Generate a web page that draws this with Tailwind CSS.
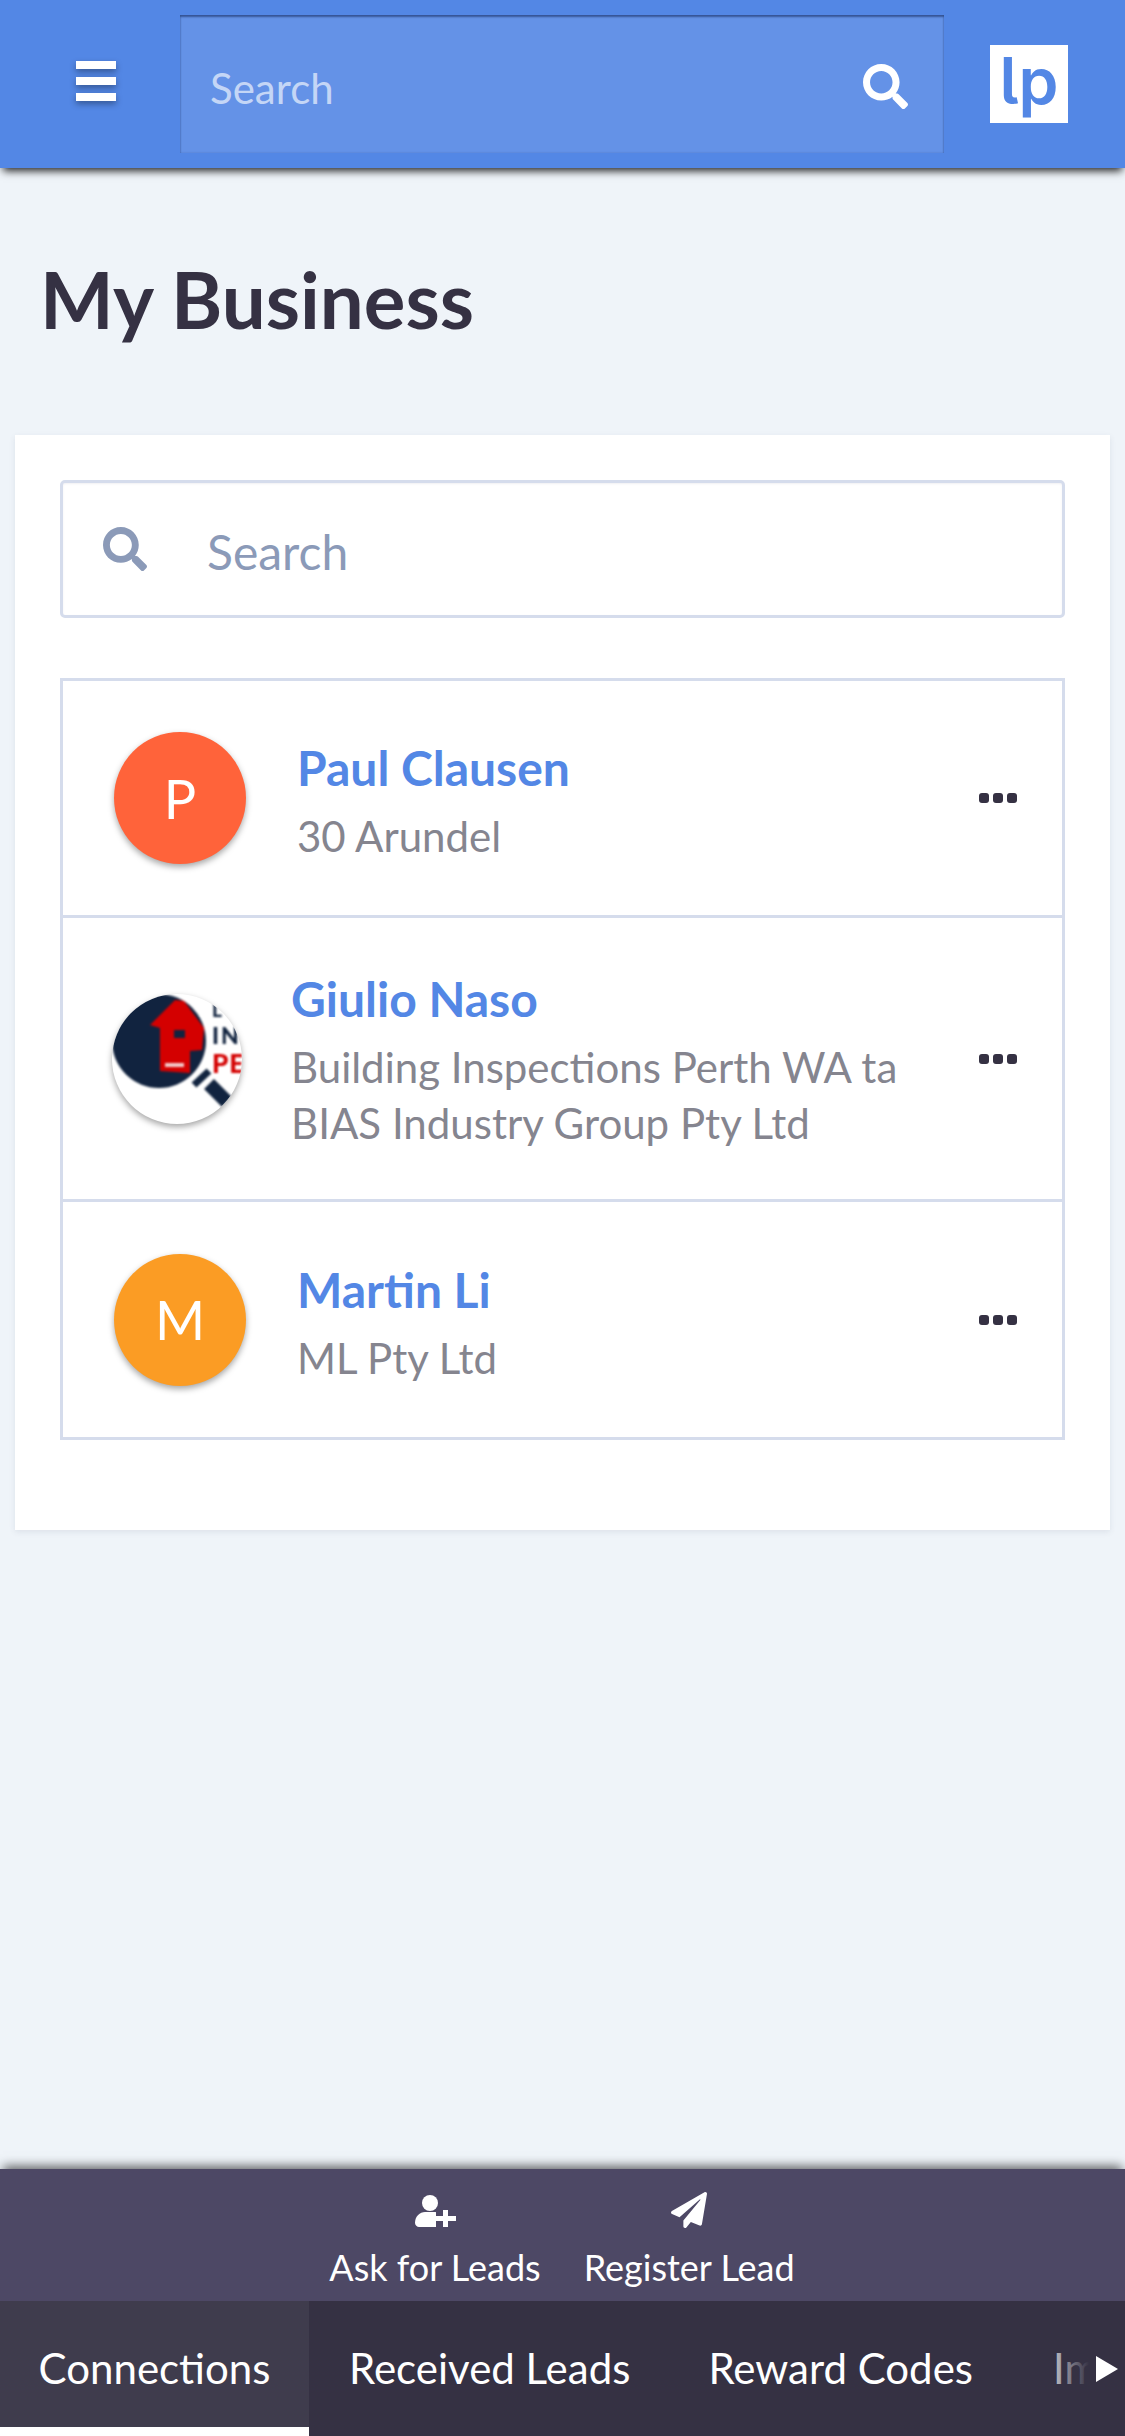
<!DOCTYPE html>
<html lang="en">
<head>
  <meta charset="UTF-8" />
  <meta name="viewport" content="width=device-width, initial-scale=1.0" />
  <title>My Business</title>
  <script src="https://cdn.jsdelivr.net/npm/@tailwindcss/browser@4"></script>
</head>
<body class="bg-[#eff4f9] font-['Lato',sans-serif] text-[#353143]">
  <div class="flex flex-col h-[2436px] overflow-hidden">

    <!-- Top bar -->
    <header class="relative z-10 flex items-center h-[168px] shrink-0 bg-[#5387e5] shadow-[0_6px_8px_-3px_rgba(0,0,0,0.85)]">
      <div class="flex flex-col gap-2 w-10 ml-[76px] -mt-[6px] drop-shadow-[0_3px_3px_rgba(0,0,0,0.35)]">
        <span class="h-2 bg-white"></span>
        <span class="h-2 bg-white"></span>
        <span class="h-2 bg-white"></span>
      </div>
      <div class="flex items-center justify-between w-[764px] h-[138px] ml-16 pl-[30px] pr-9 bg-[#6492e7] shadow-[inset_0_2px_2px_rgba(20,40,90,0.55),inset_0_0_2px_rgba(20,40,90,0.25)]">
        <span class="mt-[9px] text-[42px] text-[#c4d6f6]">Search</span>
        <svg class="mt-[4px] w-[45px] h-[45px] fill-white" viewBox="0 0 512 512"><path d="M505 442.7L405.3 343c-4.5-4.5-10.6-7-17-7H372c27.6-35.3 44-79.7 44-128C416 93.1 322.9 0 208 0S0 93.1 0 208s93.1 208 208 208c48.3 0 92.7-16.4 128-44v16.3c0 6.4 2.5 12.5 7 17l99.7 99.7c9.4 9.4 24.6 9.4 33.9 0l28.3-28.3c9.4-9.4 9.4-24.6.1-34zM208 336c-70.7 0-128-57.2-128-128 0-70.7 57.2-128 128-128 70.7 0 128 57.2 128 128 0 70.7-57.2 128-128 128z"/></svg>
      </div>
      <div class="flex items-center justify-center w-[78px] h-[78px] ml-[46px] bg-white text-[#5387e5] font-['Inter',sans-serif] text-[64px] font-semibold leading-none [font-feature-settings:'cv05']">
        <span class="-mt-[6px]">lp</span>
      </div>
    </header>

    <!-- Page content -->
    <main class="flex-1 min-h-0">
      <h1 class="h-[267px] pt-[93px] pl-[40px] text-[78px] leading-[76px] font-bold">My Business</h1>

      <section class="mx-[15px] h-[1095px] pt-[45px] px-[45px] bg-white shadow-[0_2px_6px_rgba(60,70,100,0.1)]">
        <div class="flex items-center h-[138px] pl-[40px] border-[3px] border-[#d5dcec] rounded-[5px] shadow-[inset_0_1px_2px_rgba(60,70,100,0.08)]">
          <svg class="w-[44px] h-[44px] fill-[#8b9ab8]" viewBox="0 0 512 512"><path d="M505 442.7L405.3 343c-4.5-4.5-10.6-7-17-7H372c27.6-35.3 44-79.7 44-128C416 93.1 322.9 0 208 0S0 93.1 0 208s93.1 208 208 208c48.3 0 92.7-16.4 128-44v16.3c0 6.4 2.5 12.5 7 17l99.7 99.7c9.4 9.4 24.6 9.4 33.9 0l28.3-28.3c9.4-9.4 9.4-24.6.1-34zM208 336c-70.7 0-128-57.2-128-128 0-70.7 57.2-128 128-128 70.7 0 128 57.2 128 128 0 70.7-57.2 128-128 128z"/></svg>
          <span class="ml-[60px] mt-[6px] text-[48px] text-[#8b9ab8]">Search</span>
        </div>

        <ul class="mt-[60px] border-[3px] border-[#d5dcec]">
          <li class="flex items-center h-[237px] pl-[51px] pr-[45px] border-b-[3px] border-[#d5dcec]">
            <div class="flex items-center justify-center w-[132px] h-[132px] shrink-0 rounded-full bg-[#ff633a] text-white text-[54px] shadow-[0_3px_6px_rgba(0,0,0,0.35)]">P</div>
            <div class="flex-1 ml-[51px] pt-[8px]">
              <p class="text-[48px] leading-[56px] font-bold text-[#5387e5]">Paul Clausen</p>
              <p class="mt-3 text-[42px] leading-[56px] text-[#85858f]">30 Arundel</p>
            </div>
            <div class="flex gap-1 shrink-0">
              <span class="w-[10px] h-[10px] rounded-[3px] bg-[#353143]"></span>
              <span class="w-[10px] h-[10px] rounded-[3px] bg-[#353143]"></span>
              <span class="w-[10px] h-[10px] rounded-[3px] bg-[#353143]"></span>
            </div>
          </li>
          <li class="flex items-center h-[284px] pl-[49px] pr-[45px] border-b-[3px] border-[#d5dcec]">
            <div class="w-[130px] h-[130px] shrink-0 rounded-full overflow-hidden bg-white shadow-[0_3px_6px_rgba(0,0,0,0.35)]">
              <svg class="w-full h-full blur-[0.8px]" viewBox="0 0 130 130">
                <circle cx="47" cy="47" r="47" fill="#11233f"/>
                <path d="M63 6L38 31L48 34V77L78 79V57L90 56L92 34L72 7Z" fill="#d40000"/>
                <rect x="62" y="36" width="11" height="8" fill="#11233f"/>
                <rect x="53" y="69" width="19" height="4" fill="#f3c9c9"/>
                <path d="M82 91L97 77" stroke="#11233f" stroke-width="7"/>
                <path d="M97 90L115 108" stroke="#11233f" stroke-width="14"/>
                <text x="100" y="23" font-family="Lato, sans-serif" font-size="19" font-weight="900" fill="#11233f">L</text>
                <text x="100" y="50" font-family="Lato, sans-serif" font-size="23" font-weight="900" letter-spacing="2" fill="#11233f">IN</text>
                <text x="100" y="79" font-family="Lato, sans-serif" font-size="26" font-weight="900" letter-spacing="1" fill="#d40000">PE</text>
              </svg>
            </div>
            <div class="flex-1 ml-[49px] pt-[4px]">
              <p class="text-[48px] leading-[56px] font-bold text-[#5387e5]">Giulio Naso</p>
              <p class="mt-3 text-[42px] leading-[56px] text-[#85858f]">Building Inspections Perth WA ta<br />BIAS Industry Group Pty Ltd</p>
            </div>
            <div class="flex gap-1 shrink-0">
              <span class="w-[10px] h-[10px] rounded-[3px] bg-[#353143]"></span>
              <span class="w-[10px] h-[10px] rounded-[3px] bg-[#353143]"></span>
              <span class="w-[10px] h-[10px] rounded-[3px] bg-[#353143]"></span>
            </div>
          </li>
          <li class="flex items-center h-[235px] pl-[51px] pr-[45px]">
            <div class="flex items-center justify-center w-[132px] h-[132px] shrink-0 rounded-full bg-[#fb9c24] text-white text-[54px] shadow-[0_3px_6px_rgba(0,0,0,0.35)]">M</div>
            <div class="flex-1 ml-[51px] pt-[8px]">
              <p class="text-[48px] leading-[56px] font-bold text-[#5387e5]">Martin Li</p>
              <p class="mt-3 text-[42px] leading-[56px] text-[#85858f]">ML Pty Ltd</p>
            </div>
            <div class="flex gap-1 shrink-0">
              <span class="w-[10px] h-[10px] rounded-[3px] bg-[#353143]"></span>
              <span class="w-[10px] h-[10px] rounded-[3px] bg-[#353143]"></span>
              <span class="w-[10px] h-[10px] rounded-[3px] bg-[#353143]"></span>
            </div>
          </li>
        </ul>
      </section>
    </main>

    <!-- Bottom actions and tabs -->
    <footer class="relative shrink-0 shadow-[0_-6px_10px_-3px_rgba(0,0,0,0.6)]">
      <div class="flex justify-center gap-[43px] h-[132px] pl-[3px] pr-[4px] bg-[#4d4865] text-white text-[36px]">
        <div class="flex flex-col items-center pt-[26px]">
          <svg class="w-[41px] h-[32px] fill-white" viewBox="0 0 41 32">
            <circle cx="15" cy="8" r="8"/>
            <path d="M0 28C0 21 5 17 10 17H20C25 17 29 20 30 24V32H4C2 32 0 30 0 28Z"/>
            <rect x="21" y="14" width="20" height="18" fill="#4d4865"/>
            <path d="M28 15H33V21H41V26H33V32H28V26H21V21H28Z"/>
          </svg>
          <span class="mt-[18px] leading-[44px]">Ask for Leads</span>
        </div>
        <div class="flex flex-col items-center pt-[23px]">
          <svg class="w-[36px] h-[36px] fill-white" viewBox="0 0 512 512"><path d="M476 3.2L12.5 270.6c-18.1 10.4-15.8 35.6 2.2 43.2L121 358.4l287.3-253.2c5.5-4.9 13.3 2.6 8.6 8.3L176 407v80.5c0 23.6 28.5 32.9 42.5 15.8L282 426l124.6 52.2c14.2 6 30.4-2.9 33-18.2l72-432C515 7.8 493.3-6.8 476 3.2z"/></svg>
          <span class="mt-[17px] leading-[44px]">Register Lead</span>
        </div>
      </div>
      <nav class="relative flex h-[135px] bg-[#353143] text-white text-[42px] overflow-hidden">
        <a class="flex items-center justify-center w-[309px] h-full shrink-0 bg-[#3f3c4d] border-b-[9px] border-white pt-[9px]">Connections</a>
        <a class="flex items-center h-full shrink-0 pl-[40px]">Received Leads</a>
        <a class="flex items-center h-full shrink-0 pl-[78px]">Reward Codes</a>
        <a class="flex items-center h-full shrink-0 pl-[80px]">Im</a>
        <div class="absolute right-0 top-0 flex items-center justify-end w-[72px] h-full pr-[7px] bg-gradient-to-r from-[#353143]/30 to-[#353143] to-50%">
          <svg class="w-[22px] h-[26px] fill-white" viewBox="0 0 22 26"><path d="M0 0L22 13L0 26Z"/></svg>
        </div>
      </nav>
    </footer>
  </div>
</body>
</html>
